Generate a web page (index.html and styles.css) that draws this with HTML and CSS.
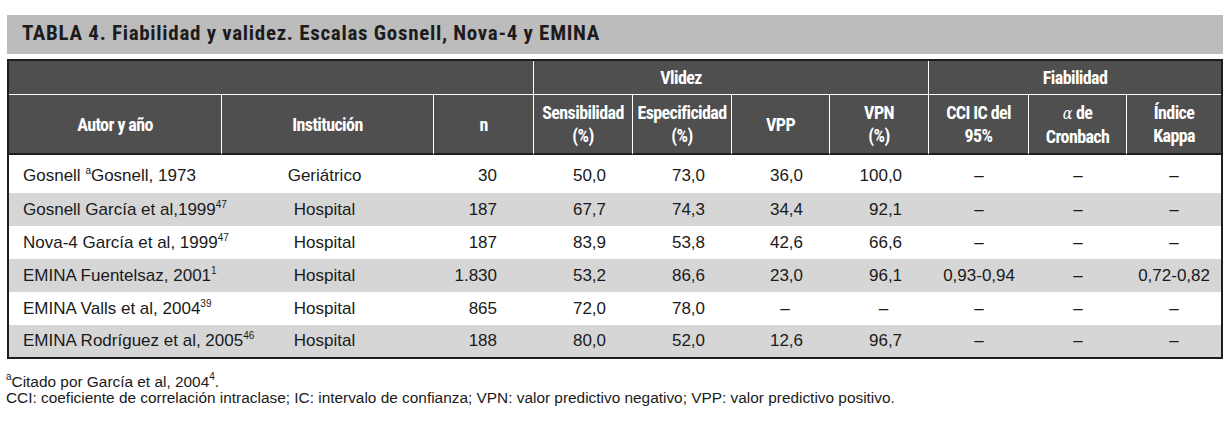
FILE: index.html
```html
<!DOCTYPE html>
<html lang="es">
<head>
<meta charset="utf-8">
<title>Tabla 4</title>
<link rel="stylesheet" href="styles.css">
</head>
<body>
<div class="page">
  <div class="caption">TABLA 4. Fiabilidad y validez. Escalas Gosnell, Nova-4 y EMINA</div>
  <table class="data">
    <colgroup>
      <col class="w-autor"><col class="w-inst"><col class="w-n"><col class="w-sens"><col class="w-esp"><col class="w-vpp"><col class="w-vpn"><col class="w-cci"><col class="w-alpha"><col class="w-kappa">
    </colgroup>
    <thead>
      <tr class="group">
        <th colspan="3" class="blank"></th>
        <th colspan="4" class="grp-valid">Vlidez</th>
        <th colspan="3" class="grp-fiab">Fiabilidad</th>
      </tr>
      <tr class="cols">
        <th>Autor y año</th>
        <th>Institución</th>
        <th>n</th>
        <th>Sensibilidad<br>(%)</th>
        <th>Especificidad<br>(%)</th>
        <th>VPP</th>
        <th>VPN<br>(%)</th>
        <th>CCI IC del<br>95%</th>
        <th><span class="alpha">α</span> de<br>Cronbach</th>
        <th class="last">Índice<br>Kappa</th>
      </tr>
    </thead>
    <tbody>
      <tr>
        <td class="autor">Gosnell <sup>a</sup>Gosnell, 1973</td><td class="inst">Geriátrico</td><td class="n">30</td>
        <td class="num">50,0</td><td class="num">73,0</td><td class="num">36,0</td><td class="num">100,0</td>
        <td class="c">–</td><td class="c">–</td><td class="c">–</td>
      </tr>
      <tr>
        <td class="autor">Gosnell García et al,1999<sup>47</sup></td><td class="inst">Hospital</td><td class="n">187</td>
        <td class="num">67,7</td><td class="num">74,3</td><td class="num">34,4</td><td class="num">92,1</td>
        <td class="c">–</td><td class="c">–</td><td class="c">–</td>
      </tr>
      <tr>
        <td class="autor">Nova-4 García et al, 1999<sup>47</sup></td><td class="inst">Hospital</td><td class="n">187</td>
        <td class="num">83,9</td><td class="num">53,8</td><td class="num">42,6</td><td class="num">66,6</td>
        <td class="c">–</td><td class="c">–</td><td class="c">–</td>
      </tr>
      <tr>
        <td class="autor">EMINA Fuentelsaz, 2001<sup>1</sup></td><td class="inst">Hospital</td><td class="n">1.830</td>
        <td class="num">53,2</td><td class="num">86,6</td><td class="num">23,0</td><td class="num">96,1</td>
        <td class="c">0,93-0,94</td><td class="c">–</td><td class="c">0,72-0,82</td>
      </tr>
      <tr>
        <td class="autor">EMINA Valls et al, 2004<sup>39</sup></td><td class="inst">Hospital</td><td class="n">865</td>
        <td class="num">72,0</td><td class="num">78,0</td><td class="dash">–</td><td class="dash">–</td>
        <td class="c">–</td><td class="c">–</td><td class="c">–</td>
      </tr>
      <tr>
        <td class="autor">EMINA Rodríguez et al, 2005<sup>46</sup></td><td class="inst">Hospital</td><td class="n">188</td>
        <td class="num">80,0</td><td class="num">52,0</td><td class="num">12,6</td><td class="num">96,7</td>
        <td class="c">–</td><td class="c">–</td><td class="c">–</td>
      </tr>
    </tbody>
  </table>
  <div class="notes">
    <p><sup>a</sup>Citado por García et al, 2004<sup>4</sup>.</p>
    <p>CCI: coeficiente de correlación intraclase; IC: intervalo de confianza; VPN: valor predictivo negativo; VPP: valor predictivo positivo.</p>
  </div>
</div>
</body>
</html>
```

FILE: styles.css
```css
body {
  margin: 0;
  background: #ffffff;
  font-family: "Liberation Sans", Arial, sans-serif;
  color: #1a1a1a;
}

.page {
  width: 1216px;
  padding: 15px 0 0 7px;
}

.caption {
  height: 39px;
  box-sizing: border-box;
  padding: 0 0 3px 15px;
  margin-bottom: 5px;
  background: #bcbcbc;
  color: #1c1c1c;
  font-family: "Roboto Condensed", "Liberation Sans", sans-serif;
  font-stretch: condensed;
  font-weight: bold;
  font-size: 21px;
  letter-spacing: 0.7px;
  line-height: 36px;
  white-space: nowrap;
}

.data {
  width: 1216px;
  table-layout: fixed;
  border-collapse: separate;
  border-spacing: 0;
  border: 2px solid #1e1e1e;
}

.w-autor { width: 213px; }
.w-inst { width: 212px; }
.w-n { width: 100px; }
.w-sens { width: 99px; }
.w-esp { width: 99px; }
.w-vpp { width: 98px; }
.w-vpn { width: 99px; }
.w-cci { width: 100px; }
.w-alpha { width: 98px; }
.w-kappa { width: 94px; }

.data th {
  padding: 0;
  background: #4f4f4f;
  color: #ffffff;
  font-family: "Roboto Condensed", "Noto Sans Condensed", "Noto Sans", sans-serif;
  font-stretch: condensed;
  font-weight: bold;
  font-size: 18px;
  letter-spacing: -0.6px;
  line-height: 23px;
  text-align: center;
  vertical-align: middle;
  white-space: nowrap;
}

.group th {
  height: 33px;
  border-bottom: 1px solid #ffffff;
}

.group .blank,
.group .grp-valid {
  border-right: 1px solid #ffffff;
}

.group .grp-valid {
  padding-right: 100px;
}

.cols th {
  height: 58px;
  border-bottom: 2px solid #1e1e1e;
  border-right: 1px solid #ffffff;
}

.cols th.last {
  border-right: 0;
}

.alpha {
  font-family: "DejaVu Serif", "Liberation Serif", serif;
  font-weight: normal;
  font-style: italic;
  font-size: 16px;
  letter-spacing: 0;
}

.data td {
  height: 33px;
  padding: 0;
  font-size: 17px;
  line-height: 20px;
  vertical-align: middle;
  white-space: nowrap;
}

.data tbody tr:first-child td {
  height: 34px;
  padding-top: 4px;
}

.data tbody tr:last-child td {
  height: 32px;
}

.data tbody tr:nth-child(even) td {
  background: #d6d6d6;
}

.autor {
  padding-left: 14px !important;
  text-align: left;
}

.inst {
  text-align: center;
  padding-right: 7px !important;
}

.n {
  text-align: right;
  padding-right: 37px !important;
}

.num {
  text-align: right;
  padding-right: 27px !important;
}

.dash {
  text-align: center;
  padding-left: 8px !important;
}

.c {
  text-align: center;
}

sup {
  font-size: 10px;
  line-height: 0;
  vertical-align: 7px;
}

.notes {
  margin: 15px 0 0 -1px;
  font-size: 15.4px;
  line-height: 16px;
  color: #1a1a1a;
}

.notes p {
  margin: 0;
  white-space: nowrap;
}
```
